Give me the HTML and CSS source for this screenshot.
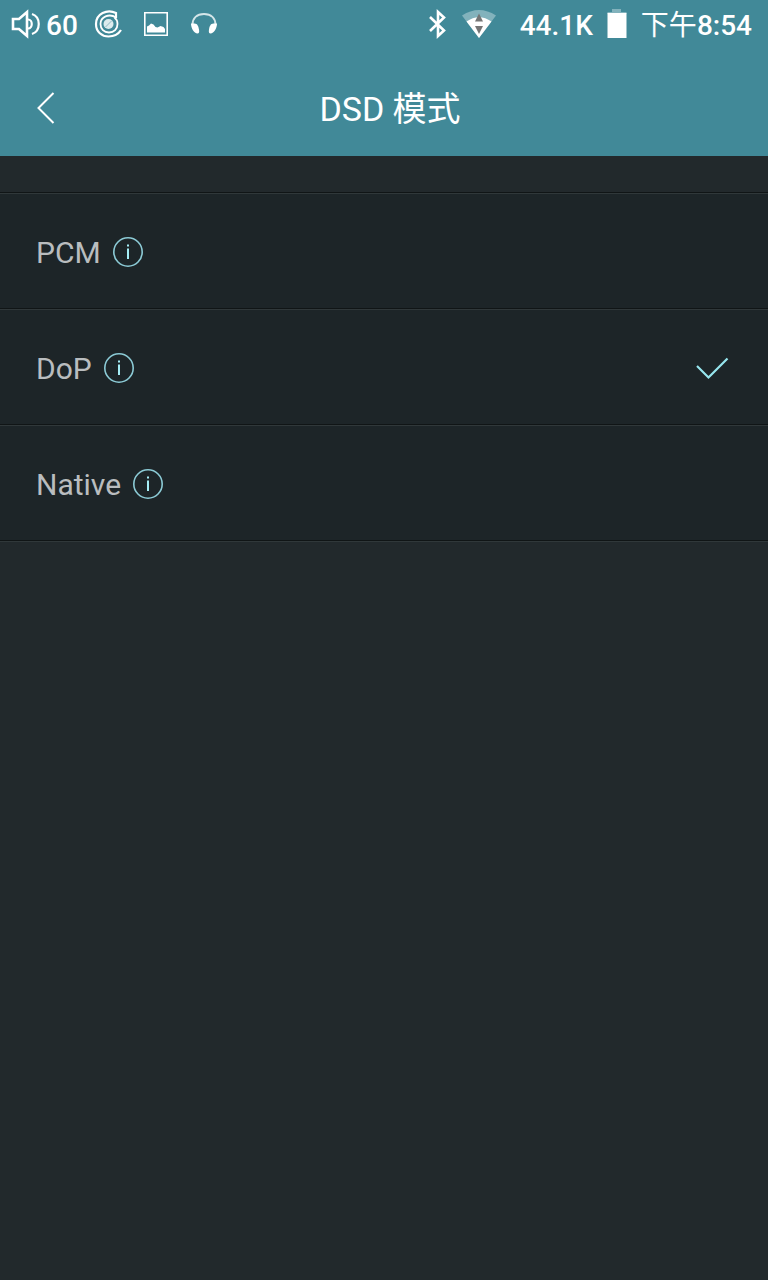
FILE: index.html
```html
<!DOCTYPE html>
<html lang="zh-CN">

<head>
    <meta charset="utf-8" />
    <meta name="viewport" content="width=device-width, initial-scale=1" />

    <title>DSD 模式</title>

    <link rel="stylesheet" href="styles.css">
</head>

<body>
    <header>
        <div class="status">
            <div class="status-side">
                <svg class="volume" width="30" height="30" viewBox="0 0 30 30">
                    <path d="M2 10h6L16 3v24l-8-7H2z" fill="none" stroke="#fff" stroke-width="2.6" />
                    <path d="M17 10.5c5 0 5 9 0 9M21 5c9 3 9 17 0 20" fill="none" stroke="#fff" stroke-width="2.2" />
                </svg>
                <span class="level">60</span>
                <svg class="disc" width="30" height="30" viewBox="0 0 30 30" fill="none" stroke="#fff">
                    <circle cx="14.5" cy="15" r="5" fill="#dcebed" stroke="none" />
                    <path d="M11.5 18l6-6" stroke="#8fbac3" stroke-width="1" />
                    <path d="M22 9V4C13-.5 2 5 2 15c0 8 6 12.500 12.500 12.500 6 0 10-2.500 12.500-6.500" stroke-width="2.2" />
                    <path d="M22 8.500C15 4 6.500 8 6.500 15c0 5 3.500 8.500 8.500 8.500S23.500 20 23.500 15c0-3-1-5-3-6.500" stroke-width="1.800" />
                </svg>
                <svg class="picture" width="24" height="24" viewBox="0 0 24 24">
                    <path d="M.8.8h22.400v22.400H.8z" fill="none" stroke="#fff" stroke-width="1.600" />
                    <path d="M3 20.500v-6l2-1 2-2 2.500 1 2 2.500 2 .5 3-1.500 3 1 1.500 2v3.500z" fill="#fff" />
                </svg>
                <svg class="headphones" width="28" height="24" viewBox="0 0 28 24">
                    <path d="M2.500 13C2.500 6 7 2 14 2s11.500 4 11.500 11" fill="none" stroke="#d5e6e9" stroke-width="2" />
                    <path d="M1 11.500h3.500c3 0 4 3 4.500 6 .5 2.500 0 4-1.500 4C4 21.500 1 16 1 11.500zM27 11.500h-3.500c-3 0-4 3-4.500 6-.5 2.500 0 4 1.500 4 3.500 0 6.500-5.500 6.500-10z" fill="#fff" />
                </svg>
            </div>
            <div class="status-side">
                <svg class="bluetooth" width="20" height="30" viewBox="0 0 20 30">
                    <path d="M2 8l14 13.500-6 5.500V3l6 5.500L2 22" fill="none" stroke="#fff" stroke-width="2.6" />
                </svg>
                <svg class="wifi" width="34" height="28" viewBox="0 0 34 28">
                    <path d="M0 5.500Q17-5.500 34 5.500L17 28z" fill="#82b2bc" />
                    <path d="M4.500 11.500Q17 3 29.500 11.500L17 28z" fill="#fff" />
                    <path d="M17 3.500l4 8h-8zM13 16h8l-4 8z" fill="#757575" />
                </svg>
                <span class="rate">44.1K</span>
                <svg class="battery" width="20" height="29" viewBox="0 0 20 29">
                    <path d="M5 0h9v3h5.500v2H.5V3H5z" fill="#82b2bc" />
                    <path d="M.5 4h19v25H.5z" fill="#fff" />
                </svg>
                <span class="clock"><span class="period">下午</span>8:54</span>
            </div>
        </div>
        <div class="title-bar">
            <svg class="back" width="20" height="34" viewBox="0 0 20 34">
                <path d="M17.500 2L2.500 17l15 15" fill="none" stroke="#fff" stroke-width="2" />
            </svg>
            <h1>DSD 模式</h1>
        </div>
    </header>
    <main>
        <ul class="modes">
            <li>
                <span>PCM</span>
                <svg class="info" width="30" height="30" viewBox="0 0 30 30">
                    <circle cx="15" cy="15" r="14.200" />
                    <path d="M15 11.500V22M15 7.500v2" />
                </svg>
            </li>
            <li>
                <span>DoP</span>
                <svg class="info" width="30" height="30" viewBox="0 0 30 30">
                    <circle cx="15" cy="15" r="14.200" />
                    <path d="M15 11.500V22M15 7.500v2" />
                </svg>
                <svg class="check" width="34" height="24" viewBox="0 0 34 24">
                    <path d="M2 10l11.500 11.500L32.500 2.500" />
                </svg>
            </li>
            <li>
                <span>Native</span>
                <svg class="info" width="30" height="30" viewBox="0 0 30 30">
                    <circle cx="15" cy="15" r="14.200" />
                    <path d="M15 11.500V22M15 7.500v2" />
                </svg>
            </li>
        </ul>
    </main>
</body>

</html>
```
FILE: styles.css
```css
html {
    background: #22292c;
    font-family: Roboto, 'Noto Sans CJK SC', sans-serif;
}

body,
h1,
ul {
    margin: 0;
    padding: 0;
}

svg {
    display: block;
    flex-shrink: 0;
}

header {
    height: 156px;
    background: #418998;
    color: #fff;
}

.status {
    display: flex;
    justify-content: space-between;
    height: 50px;
    padding: 0 16px 0 11px;
    font-size: 28px;
    font-weight: 500;
    line-height: 48px;
    white-space: nowrap;
}

.status-side {
    display: flex;
    align-items: center;
    height: 48px;
}

.status-side > span {
    padding-top: 3px;
}

.level {
    margin-left: 5px;
}

.disc {
    margin-left: 16px;
}

.picture {
    margin-left: 20px;
}

.headphones {
    margin-left: 22px;
}

.wifi {
    margin-left: 14px;
}

.rate {
    margin-left: 24px;
}

.battery {
    margin-left: 14px;
    margin-bottom: 1px;
}

.clock {
    margin-left: 14px;
}

.period {
    font-weight: 400;
}

.title-bar {
    display: flex;
    align-items: center;
    box-sizing: border-box;
    height: 106px;
    padding: 10px 36px 0;
}

.title-bar h1 {
    flex: 1;
    margin: 0 32px 0 24px;
    padding-top: 2px;
    font-size: 34px;
    font-weight: 400;
    line-height: 48px;
    text-align: center;
}

.modes {
    margin-top: 36px;
    border-top: 1px solid #101516;
    border-bottom: 1px solid #30383a;
    list-style: none;
}

.modes li {
    display: flex;
    align-items: center;
    box-sizing: border-box;
    height: 116px;
    padding: 2px 39px 0 36px;
    border-top: 1px solid #30383a;
    border-bottom: 1px solid #101516;
    background: #1d2528;
    color: #b9bdbf;
    font-size: 30px;
}

.info {
    margin-left: 12px;
    fill: none;
    stroke: #8ccbd6;
    stroke-width: 1.6;
}

.info path {
    stroke: #a5eef6;
    stroke-width: 2;
}

.check {
    margin-left: auto;
    fill: none;
    stroke: #96e6ee;
    stroke-width: 2.2;
}
```
